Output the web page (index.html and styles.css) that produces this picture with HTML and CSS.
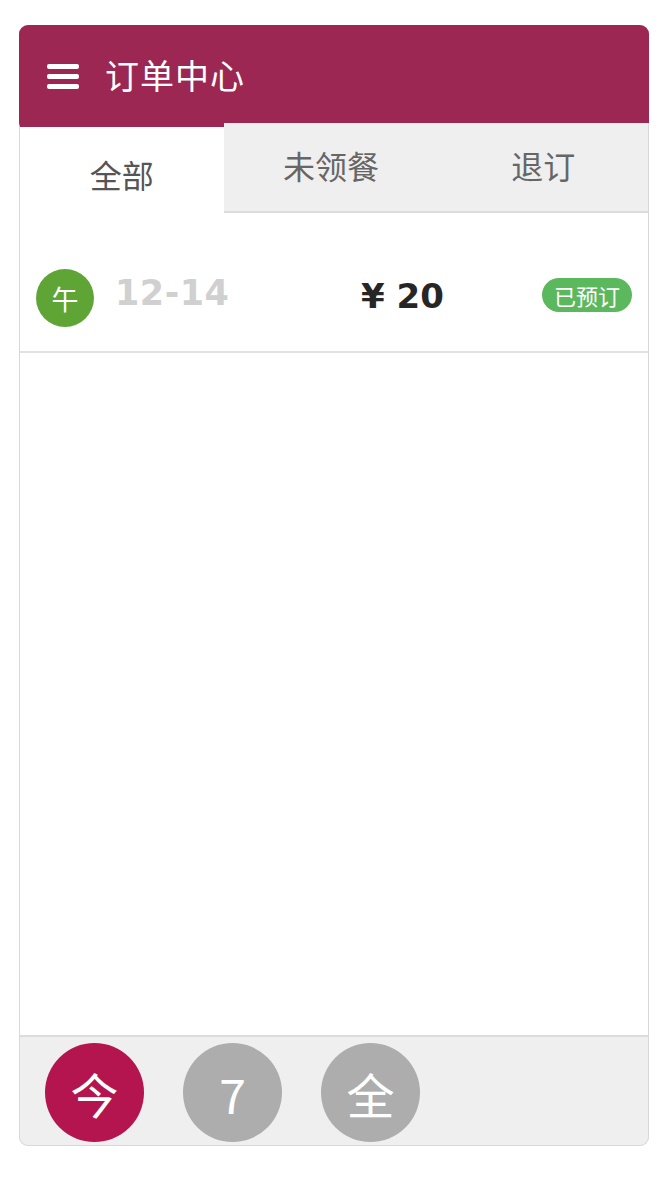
FILE: index.html
```html
<!DOCTYPE html>
<html>
	<head>
		<meta charset="utf-8" />
		<meta name="viewport" content="width=device-width" />
		<title>订单中心</title>
		<link rel="stylesheet" href="styles.css">
	</head>
	<body>
		<div class="app">
			<div class="topbar">
				<span class="menu"><i></i><i></i><i></i></span>
				<h1>订单中心</h1>
			</div>

			<div class="tabs">
				<div class="tab active">全部</div>
				<div class="tab">未领餐</div>
				<div class="tab">退订</div>
			</div>

			<div class="orders">
				<div class="order">
					<span class="meal">午</span>
					<span class="time">12-14</span>
					<span class="price">¥ 20</span>
					<span class="status">已预订</span>
				</div>
			</div>

			<div class="filters">
				<span class="filter on">今</span>
				<span class="filter">7</span>
				<span class="filter">全</span>
			</div>
		</div>
	</body>
</html>
```

FILE: styles.css
```css
body {
	margin: 0;
	padding: 25px 16px 35px 19px;
	font-family: "Noto Sans CJK SC", "Noto Sans", sans-serif;
	background: #fff;
}
.app {
	width: 630px;
	height: 1121px;
	display: flex;
	flex-direction: column;
	border-radius: 9px;
	overflow: hidden;
	box-shadow: inset 0 0 0 1px #d8d8d8;
}
.topbar {
	height: 98px;
	flex: none;
	display: flex;
	align-items: center;
	padding-left: 28px;
	background: #9c2752;
	color: #fff;
}
.menu {
	display: flex;
	flex-direction: column;
	gap: 5px;
	width: 32px;
	margin-right: 26px;
	margin-top: 4px;
}
.menu i {
	display: block;
	height: 5px;
	border-radius: 2px;
	background: #fff;
}
h1 {
	margin: 0;
	font-size: 34px;
	font-weight: normal;
	letter-spacing: 1px;
}
.tabs {
	height: 90px;
	flex: none;
	display: grid;
	grid-template-columns: 205fr 215fr 210fr;
	border-right: 1px solid #d8d8d8;
}
.tab {
	display: flex;
	align-items: center;
	justify-content: center;
	padding-bottom: 4px;
	font-size: 32px;
	color: #666;
	background: #efefef;
	border-bottom: 2px solid #dcdcdc;
}
.tab.active {
	background: #fff;
	border-top: 4px solid #9c2752;
	border-bottom: 0;
	border-left: 1px solid #d8d8d8;
	padding-bottom: 0;
	padding-top: 8px;
	color: #555;
}
.orders {
	flex: 1;
	border-left: 1px solid #d8d8d8;
	border-right: 1px solid #d8d8d8;
}
.order {
	height: 140px;
	box-sizing: border-box;
	display: flex;
	align-items: center;
	padding: 30px 16px 0 16px;
	border-bottom: 2px solid #e2e2e2;
}
.meal {
	width: 58px;
	height: 58px;
	border-radius: 50%;
	background: #5fa536;
	color: #fff;
	font-size: 27px;
	display: flex;
	align-items: center;
	justify-content: center;
	margin-top: 2px;
}
.time {
	margin-left: 21px;
	width: 246px;
	font-family: "DejaVu Sans", sans-serif;
	font-weight: bold;
	font-size: 35px;
	letter-spacing: 0.5px;
	color: #d0d0d0;
	margin-bottom: 8px;
}
.price {
	flex: 1;
	font-family: "DejaVu Sans", sans-serif;
	font-weight: bold;
	font-size: 34px;
	color: #262626;
	margin-bottom: 2px;
}
.status {
	height: 34px;
	padding: 0 12px;
	border-radius: 17px;
	background: #5cb85c;
	color: #fff;
	font-size: 22px;
	line-height: 34px;
	margin-bottom: 4px;
}
.filters {
	height: 111px;
	flex: none;
	display: flex;
	gap: 39px;
	padding: 6px 0 0 25px;
	box-sizing: border-box;
	background: #efefef;
	border-top: 2px solid #dcdcdc;
	border-left: 1px solid #d8d8d8;
	border-right: 1px solid #d8d8d8;
	border-bottom: 1px solid #d8d8d8;
	border-radius: 0 0 9px 9px;
}
.filter {
	width: 99px;
	height: 99px;
	border-radius: 50%;
	background: #adadad;
	color: #fff;
	font-size: 48px;
	display: flex;
	align-items: center;
	justify-content: center;
}
.filter.on {
	background: #b5154e;
}
```
